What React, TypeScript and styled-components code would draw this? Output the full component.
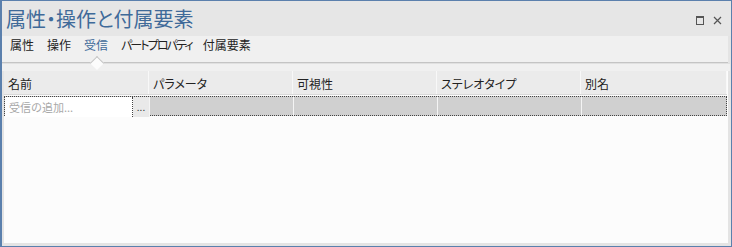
import styled, { createGlobalStyle } from 'styled-components';

const GlobalStyle = createGlobalStyle`
  html, body {
    margin: 0;
    padding: 0;
    background: #ffffff;
  }
  body {
    font-family: "Noto Sans CJK JP", "Noto Sans", sans-serif;
    font-feature-settings: "palt";
  }
`;

// katakana labels are set tighter, like the narrow UI font in the original
const tabs = [
  { label: '属性', tight: false },
  { label: '操作', tight: false },
  { label: '受信', tight: false },
  { label: 'パートプロパティ', tight: true },
  { label: '付属要素', tight: false },
];
const columns = ['名前', 'パラメータ', '可視性', 'ステレオタイプ', '別名'];

export default function App() {
  const activeTab = 2;

  return (
    <>
      <GlobalStyle />
      <Frame>
        <TitleBar>
          <Title>属性・操作と付属要素</Title>
          <WindowButtons>
            <MaxButton />
            <CloseButton>
              <svg width="9" height="9" viewBox="0 0 9 9">
                <path d="M1 1 L8 8 M8 1 L1 8" stroke="#555" strokeWidth="1.2" />
              </svg>
            </CloseButton>
          </WindowButtons>
        </TitleBar>
        <TabBar>
          {tabs.map((t, i) => (
            <Tab key={t.label} $active={i === activeTab} $tight={t.tight}>
              {t.label}
              {i === activeTab && <Caret />}
            </Tab>
          ))}
        </TabBar>
        <Body>
          <Spacer />
          <HeaderRow>
            {columns.map((c) => (
              <HeaderCell key={c}>{c}</HeaderCell>
            ))}
          </HeaderRow>
          <NewRow>
            <NameCell>
              <NameInput placeholder="受信の追加..." />
              <DotsButton>...</DotsButton>
            </NameCell>
            <EmptyCell />
            <EmptyCell />
            <EmptyCell />
            <EmptyCell $last />
          </NewRow>
        </Body>
      </Frame>
    </>
  );
}

const Frame = styled.div`
  width: 732px;
  height: 247px;
  box-sizing: border-box;
  border: 1px solid #5b80ad;
  border-top: none;
  border-left-width: 2px;
  background: #fcfcfc;
  display: flex;
  flex-direction: column;
  box-shadow: inset 0 -3px 0 #e4e4e4, inset -3px 0 0 #e4e4e4, inset 2px 0 0 #e4e4e4;
`;

const TitleBar = styled.div`
  height: 35px;
  background: #e6e6e6;
  display: flex;
  align-items: center;
  padding: 0 9px 0 4px;
  border-top: 1px solid #5b80ad;
`;

const Title = styled.div`
  flex: 1;
  font-size: 20px;
  color: #3f6a99;
  padding-bottom: 1px;
`;

const WindowButtons = styled.div`
  display: flex;
  align-items: center;
  gap: 9px;
  padding-top: 3px;
`;

const MaxButton = styled.div`
  width: 6px;
  height: 6px;
  border: 1px solid #555;
  border-top-width: 2px;
`;

const CloseButton = styled.div`
  display: flex;
  align-items: center;
`;

const TabBar = styled.div`
  height: 27px;
  background: #f0f0f0;
  display: flex;
  align-items: flex-start;
  padding: 0 0 0 2px;
  margin-right: 3px;
  border-bottom: 1px solid #c4c4c4;
  box-sizing: border-box;
`;

const Tab = styled.div<{ $active?: boolean; $tight?: boolean }>`
  position: relative;
  font-size: 12px;
  letter-spacing: ${(p) => (p.$tight ? '-1.9px' : '0')};
  color: ${(p) => (p.$active ? '#3f6a99' : '#222')};
  padding: ${(p) => (p.$tight ? '1px 5px 0 6px' : '1px 7px 0 6px')};
  line-height: 16px;
  height: 26px;
  box-sizing: border-box;
`;

const Caret = styled.span`
  position: absolute;
  left: 50%;
  bottom: -6px;
  width: 9px;
  height: 9px;
  margin-left: -5px;
  background: #fcfcfc;
  border-left: 1px solid #c4c4c4;
  border-top: 1px solid #c4c4c4;
  transform: rotate(45deg);
`;

const Body = styled.div`
  flex: 1;
  display: flex;
  flex-direction: column;
  padding: 0 4px 0 2px;
`;

const Spacer = styled.div`
  height: 7px;
  margin: 0 -3px 0 -2px;
  background: #f0f0f0;
  border-top: 1px solid #e0e0e0;
`;

const HeaderRow = styled.div`
  display: grid;
  grid-template-columns: 145px 144px 144px 144px 1fr;
  height: 24px;
  background: #ebebeb;
  border-bottom: 1px solid #d8d8d8;
  box-sizing: border-box;
`;

const HeaderCell = styled.div`
  font-size: 12px;
  color: #222;
  padding: 4px 0 0 4px;
  border-right: 1px solid #f8f8f8;
`;

const NewRow = styled.div`
  display: grid;
  grid-template-columns: 145px 144px 144px 144px 1fr;
  height: 20px;
  margin-top: 1px;
  background: #d0d0d0;
  border: 1px dotted #444;
  box-sizing: border-box;
`;

const NameCell = styled.div`
  display: flex;
  border-right: 1px solid #f4f4f4;
`;

const NameInput = styled.input`
  width: 128px;
  border: none;
  outline: none;
  background: #ffffff;
  font-size: 11px;
  font-family: "Noto Sans CJK JP", sans-serif;
  padding: 0 0 0 4px;
  border-right: 1px dotted #444;
  box-sizing: border-box;
  &::placeholder {
    color: #a8a8a8;
  }
`;

const DotsButton = styled.div`
  flex: 1;
  background: #e9e9e9;
  font-size: 10px;
  color: #333;
  text-align: center;
  line-height: 20px;
`;

const EmptyCell = styled.div<{ $last?: boolean }>`
  border-right: ${(p) => (p.$last ? 'none' : '1px solid #f4f4f4')};
`;
